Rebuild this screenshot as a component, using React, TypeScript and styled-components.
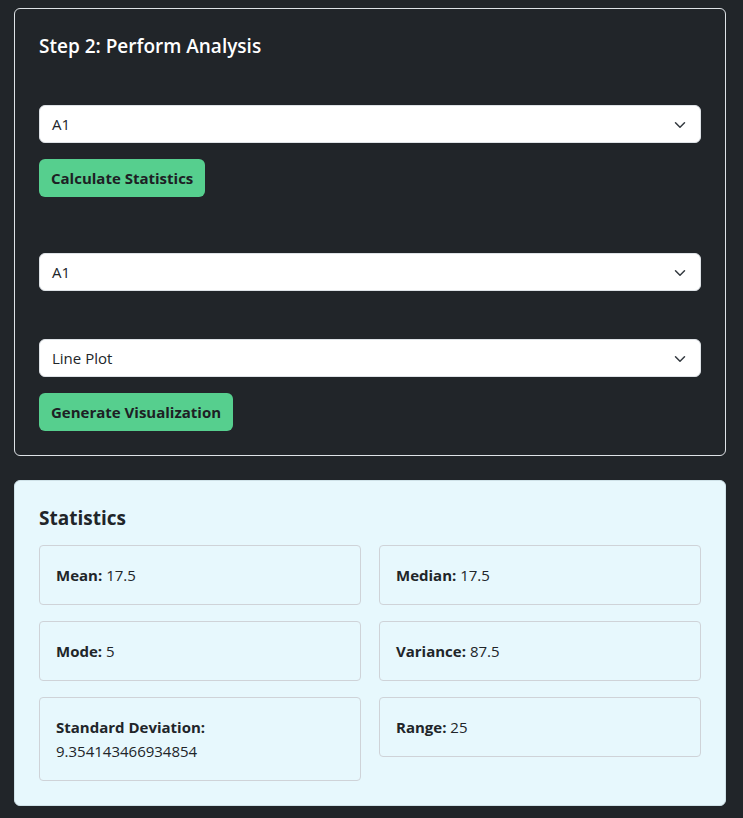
import React from 'react';
import styled, {createGlobalStyle} from 'styled-components';

const GlobalStyle = createGlobalStyle`
  html, body {
    margin: 0;
    background: #212529;
  }
  body {
    font-family: "Segoe UI", "Open Sans", "Noto Sans", sans-serif;
    color: #dee2e6;
  }
`

const Page = styled.div`
  padding: 8px 17px 12px 14px;
  display: flex;
  flex-direction: column;
  gap: 24px;
`

const Card = styled.div<{ light?: boolean }>`
  border: 1px solid ${({light}) => light ? '#cfe2e8' : '#dee2e6'};
  border-radius: 6px;
  background: ${({light}) => light ? '#e7f8fd' : '#212529'};
  color: ${({light}) => light ? '#212529' : '#fff'};
  padding: 24px;
`

const Title = styled.h2<{ heavy?: boolean }>`
  margin: 1px 0 0;
  font-size: 19px;
  font-weight: ${({heavy}) => heavy ? 700 : 600};
  line-height: 24px;
`

const Group = styled.div<{ top: number }>`
  margin-top: ${({top}) => top}px;
  display: flex;
  flex-direction: column;
  gap: 16px;
  align-items: flex-start;
`

const SelectBox = styled.div`
  position: relative;
  width: 100%;
  box-sizing: border-box;
  height: 38px;
  background: #fff;
  border: 1px solid #dee2e6;
  border-radius: 6px;
  display: flex;
  align-items: center;
  padding: 0 12px;
  font-size: 15px;
  color: #212529;
`

const Chevron = styled.svg`
  position: absolute;
  right: 14px;
  top: 13px;
`

const Button = styled.button`
  height: 38px;
  padding: 0 12px;
  border: none;
  border-radius: 6px;
  background: #56cf8e;
  color: #1d2024;
  font-family: inherit;
  font-size: 15px;
  font-weight: 700;
`

const Grid = styled.div`
  margin-top: 15px;
  display: grid;
  grid-template-columns: 1fr 1fr;
  column-gap: 18px;
  row-gap: 16px;
  align-items: start;
`

const StatBox = styled.div`
  border: 1px solid #cfd3d8;
  border-radius: 4px;
  padding: 17px 16px;
  font-size: 15px;
  line-height: 24px;
`

const Select = ({value}: { value: string }) => (
	<SelectBox>
		{value}
		<Chevron width="12" height="12" viewBox="0 0 16 16" fill="none">
			<path d="M2 5l6 6 6-6" stroke="#343a40" strokeWidth="2" strokeLinecap="round" strokeLinejoin="round"/>
		</Chevron>
	</SelectBox>
)

const stats: [string, string][] = [
	['Mean', '17.5'],
	['Median', '17.5'],
	['Mode', '5'],
	['Variance', '87.5'],
	['Standard Deviation', '9.354143466934854'],
	['Range', '25'],
]

const App = () => {
	return (
		<>
			<GlobalStyle/>
			<Page>
				<Card>
					<Title>Step 2: Perform Analysis</Title>
					<Group top={47}>
						<Select value="A1"/>
						<Button>Calculate Statistics</Button>
					</Group>
					<Group top={56}>
						<Select value="A1"/>
					</Group>
					<Group top={48}>
						<Select value="Line Plot"/>
						<Button>Generate Visualization</Button>
					</Group>
				</Card>
				<Card light>
					<Title heavy>Statistics</Title>
					<Grid>
						{stats.map(([label, value]) => (
							<StatBox key={label}>
								<b>{label}:</b> {value}
							</StatBox>
						))}
					</Grid>
				</Card>
			</Page>
		</>
	);
};

export default App;
